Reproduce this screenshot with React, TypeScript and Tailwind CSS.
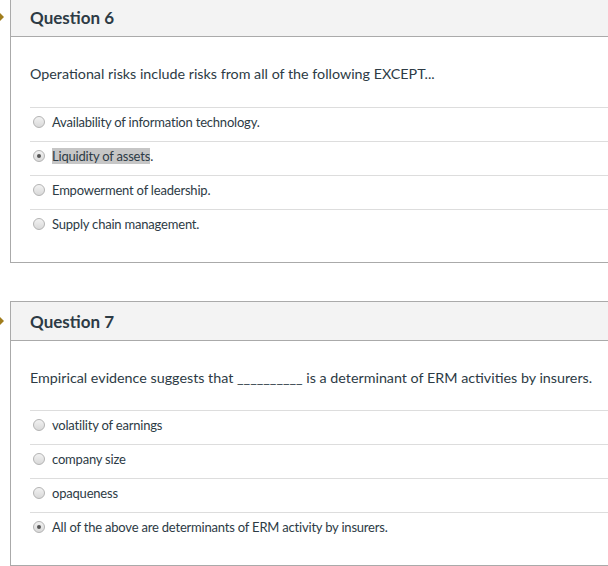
import React from "react";

const Radio = ({ checked }: { checked?: boolean }) => (
  <span className="relative inline-block w-[12px] h-[12px] rounded-full border border-[#b3b3b3] bg-gradient-to-b from-[#f2f2f2] to-[#d9d9d9] shrink-0">
    {checked && (
      <span className="absolute left-[3px] top-[3px] w-[4px] h-[4px] rounded-full bg-[#555]" />
    )}
  </span>
);

type Ans = { text: React.ReactNode; checked?: boolean };

const Card = ({
  title,
  question,
  answers,
  className,
  qClass,
}: {
  title: string;
  question: React.ReactNode;
  answers: Ans[];
  className?: string;
  qClass: string;
}) => (
  <div className={"relative ml-[10px] w-[620px] border border-[#aaaaaa] bg-white " + (className || "")}>
    <div className="absolute left-[-11px] top-[15px] w-0 h-0 border-t-[4px] border-b-[4px] border-l-[4px] border-t-transparent border-b-transparent border-l-[#a07d1c]" />
    <div className="h-[39px] bg-[#f3f3f3] border-b border-[#aaaaaa] flex items-center pl-[19px]">
      <span className="text-[17px] font-bold text-[#2d3b45] leading-none">{title}</span>
    </div>
    <div className="pl-[19px] pb-[19px]">
      <div className={"pt-[27px] text-[14.3px] leading-[20px] text-[#2d3b45] " + qClass}>{question}</div>
      <div>
        {answers.map((a, i) => (
          <div key={i} className="border-t border-[#dddddd] h-[34px] flex items-start pt-[4px]">
            <div className="flex items-center h-[20px] pl-[3px] gap-[7px]">
              <Radio checked={a.checked} />
              <span className="text-[13px] leading-[20px] text-[#2d3b45] tracking-[-0.2px]">{a.text}</span>
            </div>
          </div>
        ))}
      </div>
    </div>
  </div>
);

export default function App() {
  return (
    <div className="w-[608px] h-[566px] overflow-hidden bg-white" style={{ fontFamily: "Lato, 'Liberation Sans', sans-serif" }}>
      <Card
        className="mt-[-3px]"
        qClass="pb-[23px]"
        title="Question 6"
        question="Operational risks include risks from all of the following EXCEPT..."
        answers={[
          { text: "Availability of information technology." },
          {
            text: (
              <>
                <span className="bg-[#c6c6c6]">Liquidity of assets</span>.
              </>
            ),
            checked: true,
          },
          { text: "Empowerment of leadership." },
          { text: "Supply chain management." },
        ]}
      />
      <Card
        className="mt-[38px]"
        qClass="pb-[22px]"
        title="Question 7"
        question={
          <>
            Empirical evidence suggests that __________ is a determinant of ERM activities by insurers.
          </>
        }
        answers={[
          { text: "volatility of earnings" },
          { text: "company size" },
          { text: "opaqueness" },
          { text: "All of the above are determinants of ERM activity by insurers.", checked: true },
        ]}
      />
    </div>
  );
}
